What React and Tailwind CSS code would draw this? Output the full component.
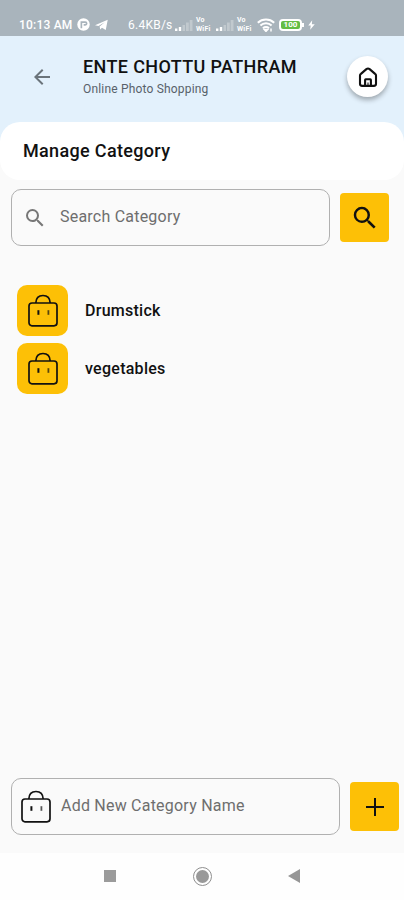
import { MdArrowBack, MdSearch } from 'react-icons/md';

const categories = ['Drumstick', 'vegetables'];

const BagIcon = () => (
  <svg viewBox="0 0 30 34" className="w-[30px] h-[34px]" fill="none" stroke="currentColor" strokeWidth="1.7">
    <rect x="1" y="9" width="28" height="22.8" rx="3" />
    <path d="M7.8 9C8 4.200 10.500 1.500 15 1.500s7 2.900 7.200 7.500" />
    <path d="M10.400 16.200v4.600" strokeWidth="2" />
    <path d="M20.400 16.200v4.600" strokeWidth="1.800" opacity="0.7" />
  </svg>
);

const HomeIcon = () => (
  <svg viewBox="0 0 20 20" className="w-5 h-5" fill="none" stroke="#111" strokeWidth="2.1" strokeLinejoin="round">
    <path d="M2 8.600c0-.7.300-1.300.9-1.700l5.500-4.800c1-.8 2.200-.8 3.200 0l5.500 4.800c.6.400.9 1 .9 1.700v8.200c0 1.300-.8 2.100-2.100 2.100H4.100c-1.300 0-2.100-.8-2.100-2.100z" />
    <path d="M7.100 18.500v-5.600c0-.4.200-.6.600-.6h4.600c.4 0 .6.200.6.600v5.600" />
    <path d="M10 15.500v3" strokeWidth="1.100" />
  </svg>
);

const SignalIcon = () => (
  <svg viewBox="0 0 18 12" className="w-[18px] h-3 shrink-0" fill="#fff">
    <path d="M0 9.500h2.400V12H0zM3.800 8h2.400v4H3.800z" />
    <path d="M7.500 6H10v6H7.500zM11 3.500h2.800V12H11zM14.700 1h2.800v11h-2.800z" opacity="0.28" />
  </svg>
);

const VoWifi = () => (
  <div className="w-[17px] shrink-0 flex flex-col gap-px text-[7px] leading-[8px] font-bold">
    <span>Vo</span>
    <span className="tracking-[0.2px]">WiFi</span>
  </div>
);

const StatusBar = () => (
  <div className="h-9 shrink-0 bg-[#a9b4bc] text-white flex items-center pt-[13px] pl-[19px]">
    <span className="w-[54px] text-[12px] font-medium whitespace-nowrap tracking-[0.2px]">10:13 AM</span>
    <svg viewBox="0 0 14 14" className="w-[13px] h-[13px] ml-1">
      <circle cx="7" cy="7" r="6.700" fill="#fff" />
      <path d="M4.700 11V4.400h4.200q1.500 0 1.500 1.400T8.900 7.400H7.200" fill="none" stroke="#a9b4bc" strokeWidth="1.800" />
    </svg>
    <svg viewBox="0 0 14 12" className="w-[13px] h-3 ml-[5px]" fill="#fff">
      <path d="M0 6.200 13.700.3 11.600 11.500 7.500 8.900 5.600 10.900 5 7.600 10.500 3 3.700 7z" />
    </svg>
    <span className="w-[47px] ml-5 text-[12px] whitespace-nowrap tracking-[0.25px]">6.4KB/s</span>
    <div className="flex items-center gap-[3px]">
      <SignalIcon />
      <VoWifi />
      <SignalIcon />
      <VoWifi />
    </div>
    <svg viewBox="0 0 18 14" className="w-[18px] h-[14px] ml-[3px] shrink-0" fill="none" stroke="#fff" strokeWidth="2">
      <path d="M.8 4.800c4.700-4.300 11.700-4.300 16.400 0M3.400 7.600c3.200-3 8-3 11.200 0M6 10.300c1.700-1.600 4.300-1.600 6 0" />
      <path d="m9 13-1.200-1.300h2.400z" />
      <path d="M14 10.500v3" strokeWidth="1.500" />
    </svg>
    <div className="ml-[4px] w-[23px] h-3 shrink-0 rounded-[4px] border-2 border-white bg-[#64bd45] flex items-center justify-center text-[8px] font-bold leading-none">
      100
    </div>
    <div className="w-[2px] h-1 bg-white" />
    <svg viewBox="0 0 8 11" className="w-[7px] h-[10px] ml-[4px]" fill="#fff">
      <path d="M4.800 0 .3 6h2.800L2.500 11 7.700 4.600H4.400z" />
    </svg>
  </div>
);

const App = () => {
  return (
    <div className="h-[900px] w-full bg-[#fafafa] flex flex-col overflow-hidden font-[Roboto,sans-serif] text-[#111]">
      <StatusBar />

      <div className="bg-[linear-gradient(#e3f1fc_120px,#fafafa_120px)] shrink-0">
        <header className="h-[86px] flex items-start pl-[30px] pr-4">
          <button className="mt-[29px]">
            <MdArrowBack className="w-6 h-6 text-[#6b747b]" />
          </button>
          <div className="ml-[29px] mt-[19px] flex-1">
            <h1 className="text-[18px] leading-[23px] font-medium whitespace-nowrap tracking-[0.37px]">ENTE CHOTTU PATHRAM</h1>
            <p className="text-[12px] leading-[16px] mt-[3px] text-[#58616a] tracking-[0.18px]">Online Photo Shopping</p>
          </div>
          <button className="mt-5 w-[41px] h-[41px] pt-px rounded-full bg-white flex items-center justify-center shadow-[0_3px_5px_rgba(0,0,0,0.3)]">
            <HomeIcon />
          </button>
        </header>
        <div className="h-[58px] bg-white rounded-[20px] pl-[23px] pb-[2px] flex items-center">
          <h2 className="text-[18px] font-medium tracking-[0.33px]">Manage Category</h2>
        </div>
      </div>

      <div className="mt-[9px] pl-[11px] flex items-center gap-[10px] shrink-0">
        <div className="w-[319px] h-[57px] border border-[#b0b0b0] rounded-[10px] flex items-center pl-[11px]">
          <MdSearch className="w-6 h-6 text-[#777]" />
          <span className="ml-[13px] pb-[2px] text-[16px] text-[#6e6e6e] tracking-[0.22px]">Search Category</span>
        </div>
        <button className="w-[49px] h-[49px] rounded-[4px] bg-[#fdc006] flex items-center justify-center">
          <MdSearch className="w-[30px] h-[30px]" />
        </button>
      </div>

      <ul className="mt-[39px] pl-[17px] flex flex-col gap-[7px] flex-1">
        {categories.map((name) => (
          <li key={name} className="flex items-center gap-[17px]">
            <div className="w-[51px] h-[51px] rounded-[10px] bg-[#fdc006] flex items-center justify-center">
              <BagIcon />
            </div>
            <span className="text-[16px] font-medium tracking-[0.27px]">{name}</span>
          </li>
        ))}
      </ul>

      <div className="mb-[18px] pl-[11px] flex items-center gap-[10px] shrink-0">
        <div className="w-[329px] h-[57px] border border-[#b0b0b0] rounded-[10px] flex items-center pl-[9px]">
          <BagIcon />
          <span className="ml-[10px] pb-[2px] text-[16px] text-[#6e6e6e] tracking-[0.22px]">Add New Category Name</span>
        </div>
        <button className="w-[49px] h-[49px] rounded-[4px] bg-[#fdc006] flex items-center justify-center">
          <svg viewBox="0 0 18 18" className="w-[18px] h-[18px]" stroke="#111" strokeWidth="2">
            <path d="M0 9h18M9 0v18" />
          </svg>
        </button>
      </div>

      <nav className="h-[47px] pb-px bg-[#fefefe] shrink-0 flex items-center pl-[104px]">
        <div className="w-3 h-3 bg-[#9b9b9b]" />
        <div className="ml-[77px] w-[19px] h-[19px] rounded-full border border-[#8f8f8f] flex items-center justify-center">
          <div className="w-[13px] h-[13px] rounded-full bg-[#999]" />
        </div>
        <svg viewBox="0 0 12 14" className="w-3 h-[14px] ml-[76px]" fill="#969696">
          <path d="M0 7 12 0v14z" />
        </svg>
      </nav>
    </div>
  );
};

export default App;
